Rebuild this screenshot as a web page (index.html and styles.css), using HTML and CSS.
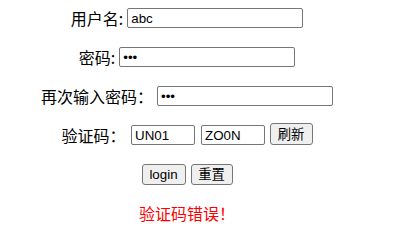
FILE: index.html
```html
<!DOCTYPE html>
<html lang="zh">
<head>
<meta charset="utf-8">
<title>注册</title>
<link rel="stylesheet" href="styles.css">
</head>
<body>
<form class="page">
  <div class="row">
    <label class="label">用户名:</label>
    <input class="field" type="text" value="abc">
  </div>
  <div class="row">
    <label class="label">密码:</label>
    <input class="field" type="password" value="abc">
  </div>
  <div class="row">
    <label class="label">再次输入密码：</label>
    <input class="field" type="password" value="abc">
  </div>
  <div class="row row-code">
    <label class="label label-code">验证码：</label>
    <input class="field field-code" type="text" value="UN01">
    <input class="field field-code field-code2" type="text" value="ZO0N">
    <button class="btn btn-refresh" type="button">刷新</button>
  </div>
  <div class="row row-actions">
    <button class="btn btn-login" type="button">login</button>
    <button class="btn btn-reset" type="reset">重置</button>
  </div>
  <div class="row">
    <span class="error">验证码错误！</span>
  </div>
</form>
</body>
</html>
```
FILE: styles.css
```css
html, body {
  margin: 0;
  padding: 0;
  background: #ffffff;
}

body {
  font-family: "Noto Sans CJK SC", "Liberation Sans", sans-serif;
  font-size: 16px;
  color: #000000;
}

.page {
  width: 374px;
  padding-top: 7px;
  display: flex;
  flex-direction: column;
  align-items: center;
  gap: 17px;
}

.row {
  height: 22px;
  display: flex;
  align-items: center;
  gap: 4px;
}

.label {
  font-size: 16px;
  line-height: 22px;
  white-space: nowrap;
}

.label-code {
  margin-right: 1.5px;
}

.field {
  box-sizing: border-box;
  width: 176px;
  height: 20px;
  margin: 0;
  padding: 1px 3px;
  border: 1px solid #767676;
  border-radius: 2px;
  font-family: "Liberation Sans", Arial, sans-serif;
  font-size: 13.33px;
  color: #000000;
  background: #ffffff;
  outline: none;
}

.field-code {
  width: 64px;
}

.field-code2 {
  margin-left: 2px;
}

.btn {
  box-sizing: border-box;
  height: 21px;
  margin: 0;
  padding: 0 6px;
  border: 1px solid #767676;
  border-radius: 3px;
  background: #efefef;
  font-family: "Liberation Sans", "Noto Sans CJK SC", sans-serif;
  font-size: 13.33px;
  line-height: 17px;
  color: #000000;
}

.btn-refresh {
  width: 43px;
  height: 22px;
  margin-left: 0.5px;
  margin-top: -2px;
}

.row-actions {
  gap: 5px;
}

.btn-login {
  width: 44px;
}

.btn-reset {
  width: 42px;
}

.error {
  color: #ff0000;
  font-size: 16px;
  line-height: 22px;
}
```
